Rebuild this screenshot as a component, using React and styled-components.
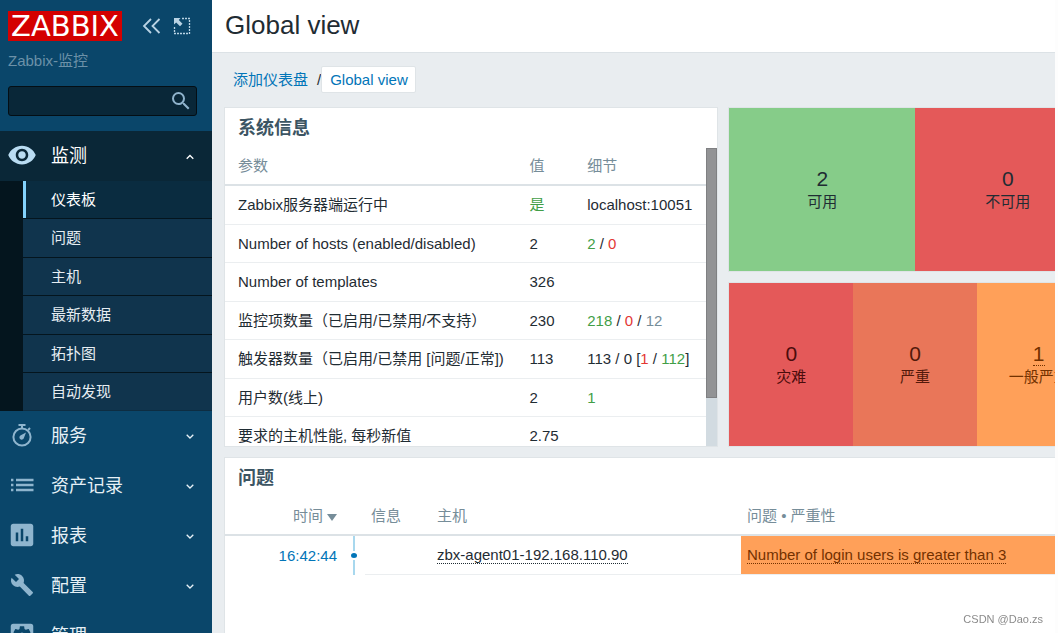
import React from "react"
import styled, { createGlobalStyle, css } from "styled-components"
import {
  MdAssessment,
  MdBuild,
  MdSearch,
  MdSettingsApplications,
  MdVisibility,
} from "react-icons/md"

const GlobalStyle = createGlobalStyle`
  * {
    box-sizing: border-box;
  }
  body {
    margin: 0;
    background: #fdfdfd;
    color: #1f2c33;
    font-family: "Liberation Sans", "Noto Sans CJK SC", sans-serif;
    font-size: 15px;
    line-height: 20px;
  }
  button, input {
    font: inherit;
    color: inherit;
    border: 0;
    padding: 0;
    background: none;
  }
  a {
    text-decoration: none;
  }
  svg {
    display: block;
  }
`

const tones = { good: "#429e47", bad: "#e33734", muted: "#768d99", plain: "#1f2c33" }

const Layout = styled.div`
  display: flex;
  height: 100vh;
  overflow: hidden;
  padding-right: 3px;
`

/* sidebar */

const Sidebar = styled.aside`
  flex: 0 0 212px;
  background: #0a466a;
  color: #fff;
  overflow: hidden;
`
const SidebarHeader = styled.div`
  display: flex;
  align-items: center;
  padding: 11px 8px 0;
`
const Logo = styled.a`
  width: 114px;
  height: 30px;
  margin-right: 19px;
  background: #d40000;
  color: #fff;
  font-family: "DejaVu Sans", sans-serif;
  font-size: 29px;
  line-height: 30px;
  text-align: center;
`
const HeaderButton = styled.button`
  width: 20px;
  height: 20px;
  margin-right: 11px;
  color: #b9d3e4;
  cursor: pointer;
`
const ServerName = styled.div`
  padding: 10px 8px 0;
  color: #6c91a8;
`
const SearchForm = styled.form`
  display: flex;
  align-items: center;
  height: 30px;
  margin: 15px 15px 15px 8px;
  padding-right: 3px;
  background: #092738;
  border: 1px solid #040e14;
  border-radius: 3px;
`
const SearchInput = styled.input`
  flex: 1;
  min-width: 0;
  height: 28px;
  padding: 0 8px;
  outline: none;
`
const SearchButton = styled.button`
  color: #8fb3cc;
  cursor: pointer;
`
const MenuLink = styled.a`
  display: flex;
  align-items: center;
  height: 50px;
  padding: 0 16px 0 7px;
  color: ${(props) => (props.$open ? "#fff" : "#e6f0f6")};
  background: ${(props) => (props.$open ? "#0a2737" : "transparent")};
  font-size: 18px;
`
const MenuIcon = styled.span`
  display: flex;
  justify-content: center;
  width: 30px;
  margin-right: 14px;
  padding-bottom: 2px;
  color: ${(props) => (props.$open ? "#b9dcf2" : "#8fb5ce")};
`
const MenuLabel = styled.span`
  flex: 1;
`
const Submenu = styled.ul`
  list-style: none;
  margin: 0;
  padding: 0 0 0 23px;
  background: #04151e;
`
const SubmenuItem = styled.li`
  height: 38px;
  background: #10344d;
  border-bottom: 1px solid #04151e;

  &:nth-child(even) {
    height: 39px;
  }
  &:last-child {
    height: 38px;
    border-bottom-color: #0d2d42;
  }
  ${(props) =>
    props.$selected &&
    css`
      background: #0a2c40;
      box-shadow: inset 3px 0 0 #83d2fc;
    `}
`
const SubmenuLink = styled.a`
  display: block;
  padding-left: 28px;
  color: ${(props) => (props.$selected ? "#fff" : "#e6edf2")};
  line-height: 37px;
`

/* page */

const Main = styled.main`
  flex: 1;
  min-width: 0;
  display: flex;
  flex-direction: column;
  background: #e9edf0;
  overflow: hidden;
`
const PageHeader = styled.header`
  padding: 9px 13px 11px;
  background: #fff;
  border-bottom: 1px solid #dce2e6;
`
const PageTitle = styled.h1`
  margin: 0;
  font-size: 26px;
  font-weight: normal;
  line-height: 32px;
`
const Breadcrumbs = styled.nav`
  display: flex;
  align-items: center;
  padding: 13px 21px 14px;
  color: #1f2c33;
`
const BreadcrumbLink = styled.a`
  color: #0275b8;
`
const Slash = styled.span`
  padding-left: 9px;
`
const BreadcrumbCurrent = styled(BreadcrumbLink)`
  padding: 3px 7px 2px 8px;
  background: #fff;
  border: 1px solid #dfe4e7;
  border-radius: 2px;
`
const Dashboard = styled.div`
  flex: 1;
  display: grid;
  grid-template-columns: 59.5% minmax(0, 1fr);
  grid-template-rows: 340px 1fr;
  gap: 10px;
  margin-left: 12px;
`
const Widget = styled.section`
  display: flex;
  flex-direction: column;
  min-height: 0;
  overflow: hidden;
  background: #fff;
  border: 1px solid #dfe4e7;

  ${(props) =>
    props.$wide &&
    css`
      grid-column: 1 / -1;
      border-right: 0;
      border-bottom: 0;
    `}
`
const WidgetTitle = styled.h4`
  flex: none;
  height: 40px;
  margin: 0;
  padding-left: 13px;
  color: #3c5563;
  font-size: 18px;
  line-height: 40px;
`
const WidgetBody = styled.div`
  flex: 1;
  display: flex;
  min-height: 0;
`
const TableArea = styled.div`
  flex: 1;
  min-width: 0;
  overflow: hidden;
`
const ScrollTrack = styled.div`
  flex: 0 0 11px;
  background: #d2dbe1;
`
const ScrollThumb = styled.div`
  height: 84%;
  background: #929395;
  border: 1px solid #7f8082;
`

const Table = styled.table`
  width: 100%;
  table-layout: fixed;
  border-collapse: separate;
  border-spacing: 0;
  white-space: nowrap;
`
const Th = styled.th`
  width: ${(props) => props.$width || "auto"};
  height: 38px;
  padding: 0 6px;
  border-bottom: 2px solid #dce2e6;
  color: #768d99;
  font-weight: normal;
  text-align: ${(props) => props.$align || "left"};

  &:first-child {
    padding-left: 13px;
  }
`
const Td = styled.td`
  height: 39px;
  padding: 0 6px;
  border-bottom: 1px solid #ebeef0;

  &:first-child {
    padding-left: 13px;
  }
  tr:nth-child(even) > & {
    height: 38px;
  }
`
const Value = styled.span`
  color: ${(props) => tones[props.$tone]};
`
const SortArrow = styled.span`
  display: inline-block;
  margin-left: 4px;
  border: 5px solid transparent;
  border-top: 7px solid #768d99;
  border-bottom: 0;
`

const TimeTd = styled(Td)`
  border-bottom: 0;
  text-align: right;
`
const TimeLink = styled.a`
  color: #0275b8;
`
const TimelineTd = styled(Td)`
  padding: 0;
  border-bottom: 0;
`
const Timeline = styled.div`
  display: flex;
  flex-direction: column;
  align-items: center;
  height: 39px;
  gap: 2px;
`
const TimelineLine = styled.span`
  flex: 1;
  width: 2px;
  background: #a8d8ee;
`
const TimelineDot = styled.span`
  width: 6px;
  height: 5px;
  border-radius: 50%;
  background: #0275b8;
`
const ProblemTd = styled(Td)`
  background: #ffa059;
  background-clip: padding-box;
`
const DottedLink = styled.a`
  color: ${(props) => props.$color || "#1f2c33"};
  border-bottom: 1px dotted currentColor;
`

const WidgetStack = styled.div`
  display: grid;
  grid-template-rows: 1fr 1fr;
  gap: 10px;
  min-height: 0;
`
const Totals = styled.section`
  display: grid;
  grid-template-columns: repeat(${(props) => props.$columns}, ${(props) => props.$size});
  overflow: hidden;
  border: 1px solid #dfe4e7;
  border-right: 0;
`
const TotalCell = styled.div`
  display: flex;
  flex-direction: column;
  align-items: center;
  justify-content: center;
  background: ${(props) => props.$bg};
  color: ${(props) => props.$color || "#1f2c33"};
`
const TotalCount = styled.span`
  font-size: 21px;
  line-height: 24px;
`
const TotalLabel = styled.span`
  line-height: 22px;
  white-space: nowrap;
`

const Watermark = styled.div`
  position: fixed;
  right: 15px;
  bottom: 4px;
  color: #8b8b8b;
  font-size: 11px;
`

const submenu = ["仪表板", "问题", "主机", "最新数据", "拓扑图", "自动发现"]

const systemInfo = [
  ["Zabbix服务器端运行中", [["是", "good"]], [["localhost:10051"]]],
  ["Number of hosts (enabled/disabled)", [["2"]], [["2", "good"], [" / "], ["0", "bad"]]],
  ["Number of templates", [["326"]], []],
  [
    "监控项数量（已启用/已禁用/不支持）",
    [["230"]],
    [["218", "good"], [" / "], ["0", "bad"], [" / "], ["12", "muted"]],
  ],
  [
    "触发器数量（已启用/已禁用 [问题/正常])",
    [["113"]],
    [["113 / 0 ["], ["1", "bad"], [" / "], ["112", "good"], ["]"]],
  ],
  ["用户数(线上)", [["2"]], [["1", "good"]]],
  ["要求的主机性能, 每秒新值", [["2.75"]], []],
]

const CollapseIcon = () => (
  <svg width="20" height="20" viewBox="0 0 20 20" fill="none" stroke="currentColor" strokeWidth="1.800">
    <path d="M10 3L3 10L10 17M18.500 3L11.500 10L18.500 17" />
  </svg>
)

const KioskIcon = () => (
  <svg width="20" height="20" viewBox="0 0 20 20" fill="none" stroke="currentColor">
    <path
      d="M10 2.500H18M17.500 4V18M16 17.500H2M2.500 16V10"
      strokeWidth="1.300"
      strokeDasharray="2 1"
    />
    <path d="M2 2H8.500L6.800 4L10.500 7.700L8 10.200L4.200 6.500L2 8.500Z" fill="currentColor" stroke="none" />
  </svg>
)

const TimerIcon = () => (
  <svg width="24" height="24" viewBox="0 0 24 24" fill="none" stroke="currentColor">
    <circle cx="12" cy="14" r="8.600" strokeWidth="2" />
    <path d="M8.500 2H15.500M12 2V5M18.200 7L20 5" strokeWidth="2" />
    <path d="M16 9.500L13.900 15A2.300 2.300 0 1 1 10.800 12.200Z" fill="currentColor" stroke="none" />
  </svg>
)

const ListIcon = () => (
  <svg width="24" height="24" viewBox="0 0 24 24" stroke="currentColor" strokeWidth="2.400">
    <path d="M1 7H3.400M1 12H3.400M1 17H3.400M6 7H23.500M6 12H23.500M6 17H23.500" />
  </svg>
)

const Chevron = ({ up }) => (
  <svg width="12" height="8" viewBox="0 0 12 8" fill="none" stroke="currentColor" strokeWidth="1.300">
    <path d={up ? "M2.700 6.800L6 3.500L9.300 6.800" : "M2.700 2.700L6 6L9.300 2.700"} />
  </svg>
)

const MenuEntry = ({ icon, label, open }) => (
  <MenuLink href="#" $open={open}>
    <MenuIcon $open={open}>{icon}</MenuIcon>
    <MenuLabel>{label}</MenuLabel>
    <Chevron up={open} />
  </MenuLink>
)

const Parts = ({ parts }) =>
  parts.map(([text, tone = "plain"], i) => (
    <Value key={i} $tone={tone}>
      {text}
    </Value>
  ))

const Total = ({ count, label, bg, color, linked }) => (
  <TotalCell $bg={bg} $color={color}>
    <TotalCount>
      {linked ? (
        <DottedLink href="#" $color={color}>
          {count}
        </DottedLink>
      ) : (
        count
      )}
    </TotalCount>
    <TotalLabel>{label}</TotalLabel>
  </TotalCell>
)

const App = () => {
  return (
    <Layout>
      <GlobalStyle />
      <Sidebar>
        <SidebarHeader>
          <Logo href="#">ZABBIX</Logo>
          <HeaderButton type="button" aria-label="Collapse sidebar">
            <CollapseIcon />
          </HeaderButton>
          <HeaderButton type="button" aria-label="Hide sidebar">
            <KioskIcon />
          </HeaderButton>
        </SidebarHeader>
        <ServerName>Zabbix-监控</ServerName>
        <SearchForm role="search">
          <SearchInput type="text" aria-label="Search" />
          <SearchButton type="button" aria-label="Submit search">
            <MdSearch size={24} />
          </SearchButton>
        </SearchForm>
        <nav>
          <MenuEntry icon={<MdVisibility size={30} />} label="监测" open />
          <Submenu>
            {submenu.map((label, i) => (
              <SubmenuItem key={label} $selected={i === 0}>
                <SubmenuLink href="#" $selected={i === 0}>
                  {label}
                </SubmenuLink>
              </SubmenuItem>
            ))}
          </Submenu>
          <MenuEntry icon={<TimerIcon />} label="服务" />
          <MenuEntry icon={<ListIcon />} label="资产记录" />
          <MenuEntry icon={<MdAssessment size={30} />} label="报表" />
          <MenuEntry icon={<MdBuild size={24} />} label="配置" />
          <MenuEntry icon={<MdSettingsApplications size={30} />} label="管理" />
        </nav>
      </Sidebar>

      <Main>
        <PageHeader>
          <PageTitle>Global view</PageTitle>
        </PageHeader>
        <Breadcrumbs>
          <BreadcrumbLink href="#">添加仪表盘</BreadcrumbLink>
          <Slash>/</Slash>
          <BreadcrumbCurrent href="#">Global view</BreadcrumbCurrent>
        </Breadcrumbs>

        <Dashboard>
          <Widget>
            <WidgetTitle>系统信息</WidgetTitle>
            <WidgetBody>
              <TableArea>
                <Table>
                  <thead>
                    <tr>
                      <Th $width="62%">参数</Th>
                      <Th $width="12%">值</Th>
                      <Th>细节</Th>
                    </tr>
                  </thead>
                  <tbody>
                    {systemInfo.map(([name, value, details]) => (
                      <tr key={name}>
                        <Td>{name}</Td>
                        <Td>
                          <Parts parts={value} />
                        </Td>
                        <Td>
                          <Parts parts={details} />
                        </Td>
                      </tr>
                    ))}
                  </tbody>
                </Table>
              </TableArea>
              <ScrollTrack>
                <ScrollThumb />
              </ScrollTrack>
            </WidgetBody>
          </Widget>

          <WidgetStack>
            <Totals $columns={2} $size="57%">
              <Total count="2" label="可用" bg="#86cc89" />
              <Total count="0" label="不可用" bg="#e45959" />
            </Totals>
            <Totals $columns={3} $size="38%">
              <Total count="0" label="灾难" bg="#e45959" color="#4b0c0c" />
              <Total count="0" label="严重" bg="#e97659" color="#52190b" />
              <Total count="1" label="一般严重" bg="#ffa059" color="#733100" linked />
            </Totals>
          </WidgetStack>

          <Widget $wide>
            <WidgetTitle>问题</WidgetTitle>
            <TableArea>
              <Table>
                <thead>
                  <tr>
                    <Th $width="118px" $align="right">
                      时间
                      <SortArrow />
                    </Th>
                    <Th $width="22px" />
                    <Th $width="66px">信息</Th>
                    <Th $width="310px">主机</Th>
                    <Th>问题 • 严重性</Th>
                  </tr>
                </thead>
                <tbody>
                  <tr>
                    <TimeTd>
                      <TimeLink href="#">16:42:44</TimeLink>
                    </TimeTd>
                    <TimelineTd>
                      <Timeline>
                        <TimelineLine />
                        <TimelineDot />
                        <TimelineLine />
                      </Timeline>
                    </TimelineTd>
                    <Td />
                    <Td>
                      <DottedLink href="#">zbx-agent01-192.168.110.90</DottedLink>
                    </Td>
                    <ProblemTd>
                      <DottedLink href="#" $color="#733100">
                        Number of login users is greater than 3
                      </DottedLink>
                    </ProblemTd>
                  </tr>
                </tbody>
              </Table>
            </TableArea>
          </Widget>
        </Dashboard>
      </Main>
      <Watermark>CSDN @Dao.zs</Watermark>
    </Layout>
  )
}
export default App
